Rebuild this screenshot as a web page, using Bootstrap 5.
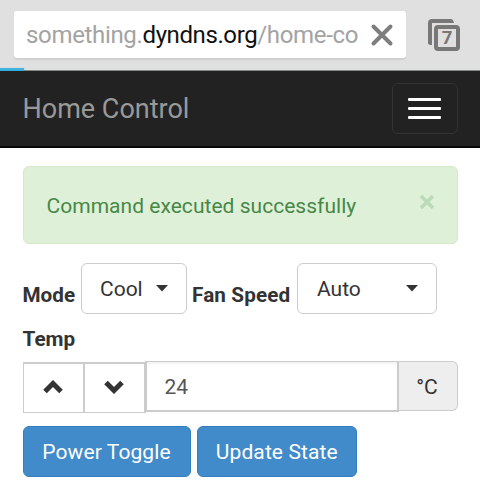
<!DOCTYPE html>
<html lang="en">
<head>
<meta charset="utf-8">
<meta name="viewport" content="width=device-width, initial-scale=1">
<title>Home Control</title>
<link rel="stylesheet" href="https://cdn.jsdelivr.net/npm/bootstrap@5.3.0/dist/css/bootstrap.min.css">
<style>
body{font-family:Roboto,"Liberation Sans",sans-serif;font-size:21px;line-height:30px;color:#333;background:#fff;height:480px;overflow:hidden}
.browser-bar{height:71px;background:#e0e0e0;border-bottom:1px solid #858985;padding:11px 20px 0 14px}
.address{width:392px;height:47px;background:#fff;border-radius:3px;box-shadow:0 2px 1px #cfcfcf;padding:0 12px 0 12px}
.url{font-size:24px;letter-spacing:-.33px;color:#a3a3a3;white-space:nowrap;line-height:47px;padding-top:2px}
.url b{font-weight:400;color:#111;letter-spacing:-.4px}
.tabs-icon{margin-top:8px}
.progress-line{left:0;top:68px;width:24px;height:4px;background:linear-gradient(#48b9e4,#26a5d8);box-shadow:0 1px 2px #167ba588}
.app-nav{height:77px;background:#222;border-bottom:2px solid #080808;padding:0 22.5px 0 22.5px}
.app-nav .navbar-brand{font-size:27px;color:#999;line-height:40px;padding:0;margin:0}
.app-nav .navbar-toggler{width:66px;height:51px;border:1.5px solid #333;border-radius:6px;padding:0;gap:6px}
.bar{width:33px;height:3px;background:#fff;border-radius:1px}
.content{padding:18px 22.5px 0 22.5px}
.notice{height:78px;margin:0 0 19px;padding:2px 22px 0 23px;background:#dff0d8;border:1px solid #d6e9c6;border-radius:6px;color:#468847;letter-spacing:.03px}
.notice .dismiss{background:none;border:0;padding:0;margin-top:-8px;line-height:0}
.field-label{font-weight:700;line-height:30px;font-size:20.7px}
.mode-label{width:58.5px;margin-top:17px}
.fan-label{width:105px;margin:17px 0 0 5px;white-space:nowrap;letter-spacing:.12px}
.temp-label{margin-top:10px}
.picker{height:51px;border:1.5px solid #ccc;border-radius:6px;color:#333;font-size:21px;padding:2px 18px 0;background:#fff}
.picker svg{margin-top:-2px}
.mode-picker{width:106px}
.fan-picker{width:139.5px;padding-left:19px}
.temp-row{height:51px;margin:7px 0 14px}
.step{width:62px;height:51px;background:#fff;border:2px solid #ccc;border-left-width:1px;border-bottom-width:1px;border-radius:0!important;padding:0;margin-top:1px}
.step svg{margin:-3px 1px 0 0}
.temp-row .form-control{height:51px;border:2px solid #ccc;border-top-width:1px;border-radius:0;font-size:21px;color:#555;padding:2px 18px 0;box-shadow:inset 0 2px 2px #0000000d}
.temp-row .input-group-text{width:60px;height:50px;background:#eee;border:1.5px solid #ccc;border-left:0;border-radius:0 6px 6px 0;font-size:21px;color:#333;padding:3px 0 0}
.actions{gap:6px}
.action{height:51px;background:#428bca;border:1px solid #357ebd;border-radius:6px;color:#fff;font-size:21px;letter-spacing:.1px;padding:2px 0 0}
.power{width:168px}
.update{width:160.5px}
</style>
</head>
<body>
<header class="browser-bar position-relative d-flex justify-content-between">
  <div class="address d-flex align-items-center justify-content-between">
    <div class="url">something.<b>dyndns.org</b>/home-co</div>
    <svg width="24" height="24" viewBox="0 0 24 24"><path d="M3.500 3.500 20.500 20.500M20.500 3.500 3.500 20.500" stroke="#7e7e7e" stroke-width="4" stroke-linecap="round"/></svg>
  </div>
  <svg class="tabs-icon" width="32" height="33" viewBox="0 0 32 33"><path d="M0 24V4q0-4 4-4H23q2 0 3 4H4V26Q0 26 0 24Z" fill="#787878"/><rect x="8" y="8" width="22" height="22" rx="2" fill="#e0e0e0" stroke="#787878" stroke-width="4"/><text x="19" y="25" text-anchor="middle" font-size="18.500" font-weight="700" fill="#787878">7</text></svg>
  <div class="progress-line position-absolute"></div>
</header>
<nav class="navbar app-nav d-flex align-items-center">
  <a class="navbar-brand" href="#">Home Control</a>
  <button class="navbar-toggler d-flex flex-column align-items-center justify-content-center" type="button" aria-label="Menu"><span class="bar"></span><span class="bar"></span><span class="bar"></span></button>
</nav>
<main class="content">
  <div class="alert notice d-flex align-items-center justify-content-between">
    <span>Command executed successfully</span>
    <button class="dismiss" type="button" aria-label="Close"><svg width="16" height="16" viewBox="0 0 16 16"><path d="M2 2 14 14M14 2 2 14" stroke="#bcdab8" stroke-width="3.600"/></svg></button>
  </div>
  <div class="d-flex align-items-start">
    <span class="field-label mode-label">Mode</span>
    <button class="btn picker mode-picker d-flex align-items-center justify-content-between">Cool<svg width="12" height="7"><path d="M0 0H12L6 6.500Z" fill="#333"/></svg></button>
    <span class="field-label fan-label">Fan Speed</span>
    <button class="btn picker fan-picker d-flex align-items-center justify-content-between">Auto<svg width="12" height="7"><path d="M0 0H12L6 6.500Z" fill="#333"/></svg></button>
  </div>
  <div class="field-label temp-label">Temp</div>
  <div class="input-group temp-row d-flex flex-nowrap align-items-start">
    <button class="btn step" type="button" aria-label="Warmer"><svg width="20" height="14" viewBox="0 0 20 14"><path d="M2 11.500 10 3.500 18 11.500" fill="none" stroke="#333" stroke-width="5"/></svg></button>
    <button class="btn step" type="button" aria-label="Cooler"><svg width="20" height="14" viewBox="0 0 20 14"><path d="M2 2.500 10 10.500 18 2.500" fill="none" stroke="#333" stroke-width="5"/></svg></button>
    <input class="form-control" type="text" value="24" aria-label="Temperature">
    <span class="input-group-text justify-content-center">°C</span>
  </div>
  <div class="actions d-flex">
    <button class="btn action power">Power Toggle</button>
    <button class="btn action update">Update State</button>
  </div>
</main>
<script src="https://cdn.jsdelivr.net/npm/bootstrap@5.3.0/dist/js/bootstrap.bundle.min.js"></script>
</body>
</html>
